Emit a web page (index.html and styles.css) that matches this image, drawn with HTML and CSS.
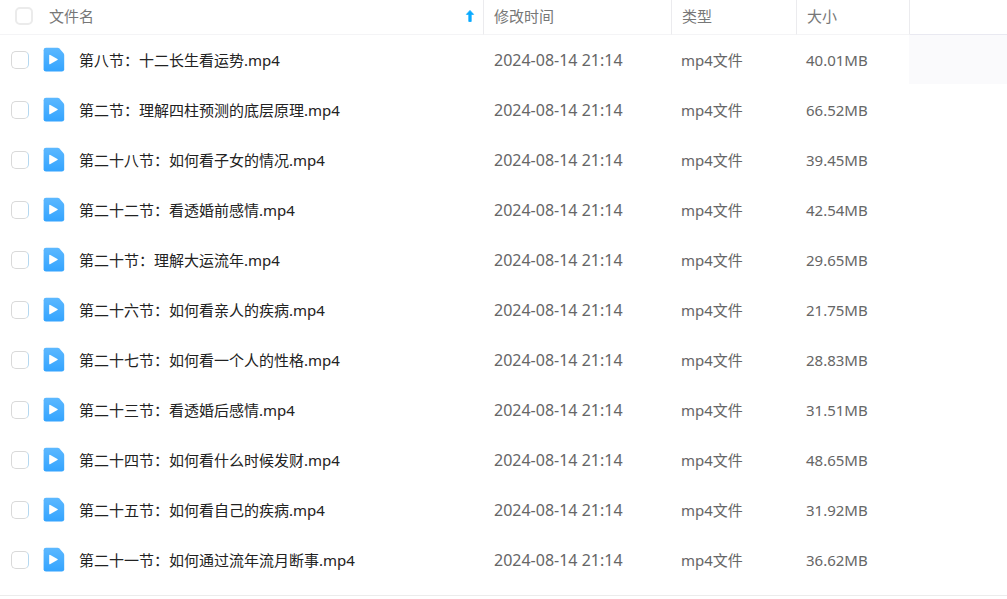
FILE: index.html
```html
<!DOCTYPE html>
<html lang="zh-CN">
<head>
    <meta charset="UTF-8">
    <meta name="viewport" content="width=device-width, initial-scale=1.0">
    <title>文件列表</title>
    <link rel="stylesheet" href="styles.css">
</head>
<body>
    <svg class="defs" aria-hidden="true">
        <defs>
            <linearGradient id="video-fill" x1="0" y1="0" x2="0" y2="1">
                <stop offset="0" stop-color="#5cb8ff"/>
                <stop offset="1" stop-color="#34a4ff"/>
            </linearGradient>
            <symbol id="icon-video" viewBox="0 0 22 26">
                <path d="M3 .8h11.600q1 0 1.800.8l4 4.400q.8.900.8 2v14.200q0 2.400-2.400 2.400H3Q.6 24.600.6 22.200V3.200Q.6.8 3 .8z" fill="url(#video-fill)"/>
                <path d="M6.200 8.600q0-1.300 1.200-.7l7 4q1 .6 0 1.200l-7 4q-1.200.6-1.200-.7z" fill="#fff"/>
            </symbol>
        </defs>
    </svg>

    <div class="file-list">
        <table class="file-table">
            <colgroup>
                <col class="col-name">
                <col class="col-time">
                <col class="col-type">
                <col class="col-size">
                <col>
            </colgroup>
            <thead>
                <tr>
                    <th scope="col">
                        <div class="head-name">
                            <input type="checkbox" class="check" id="check-all">
                            <label for="check-all">文件名</label>
                            <svg class="sort-arrow" viewBox="0 0 10 14" aria-hidden="true">
                                <path d="M5 1.400L8.600 5.400H6.200V12.500H3.800V5.400H1.400z" fill="#09aaff" stroke="#09aaff" stroke-width=".8" stroke-linejoin="round"/>
                            </svg>
                        </div>
                    </th>
                    <th scope="col">修改时间</th>
                    <th scope="col">类型</th>
                    <th scope="col">大小</th>
                    <td class="head-blank"></td>
                </tr>
            </thead>
            <tbody id="file-rows"></tbody>
        </table>
    </div>

    <script>
        const files = [
            ['第八节：十二长生看运势.mp4', '40.01MB'],
            ['第二节：理解四柱预测的底层原理.mp4', '66.52MB'],
            ['第二十八节：如何看子女的情况.mp4', '39.45MB'],
            ['第二十二节：看透婚前感情.mp4', '42.54MB'],
            ['第二十节：理解大运流年.mp4', '29.65MB'],
            ['第二十六节：如何看亲人的疾病.mp4', '21.75MB'],
            ['第二十七节：如何看一个人的性格.mp4', '28.83MB'],
            ['第二十三节：看透婚后感情.mp4', '31.51MB'],
            ['第二十四节：如何看什么时候发财.mp4', '48.65MB'],
            ['第二十五节：如何看自己的疾病.mp4', '31.92MB'],
            ['第二十一节：如何通过流年流月断事.mp4', '36.62MB']
        ];

        const fileRows = document.getElementById('file-rows');
        const checkAll = document.getElementById('check-all');

        files.forEach(([name, size], i) => {
            const row = document.createElement('tr');
            row.innerHTML = `
                <td>
                    <div class="file-name">
                        <input type="checkbox" class="check" id="file-${i}">
                        <svg class="file-icon" aria-hidden="true"><use href="#icon-video"/></svg>
                        <label for="file-${i}">${name}</label>
                    </div>
                </td>
                <td class="time">2024-08-14 21:14</td>
                <td>mp4文件</td>
                <td>${size}</td>
                <td class="blank"><div></div></td>`;
            fileRows.appendChild(row);
        });

        // Header box toggles every row
        checkAll.addEventListener('change', () => {
            fileRows.querySelectorAll('.check').forEach(box => {
                box.checked = checkAll.checked;
            });
        });
    </script>
</body>
</html>
```

FILE: styles.css
```css
body {
    margin: 0;
    background-color: #fff;
    color: #666;
    font-family: "Noto Sans", "Noto Sans CJK SC", sans-serif;
    font-size: 15px;
    line-height: 20px;
}
.defs {
    position: absolute;
    width: 0;
    height: 0;
}
.file-list {
    padding-bottom: 10px;
    border-bottom: 1px solid #ececec;
}
.file-table {
    width: 100%;
    table-layout: fixed;
    border-collapse: separate;
    border-spacing: 0;
}
.col-name {
    width: 484px;
}
.col-time {
    width: 188px;
}
.col-type {
    width: 125px;
}
.col-size {
    width: 113px;
}
.file-table th,
.file-table td {
    box-sizing: border-box;
    padding: 0 10px;
    text-align: left;
    font-weight: normal;
    white-space: nowrap;
}
.file-table thead th,
.file-table .head-blank {
    height: 35px;
    padding-bottom: 2px;
    border-bottom: 1px solid #f4f4f6;
}
.file-table thead th {
    border-right: 1px solid #ebebee;
    color: #777;
}
.file-table .head-blank {
    border-bottom-color: #e9e9f1;
}
.file-table tbody td {
    height: 50px;
    padding: 0 9px;
}
.file-table tbody .time {
    padding: 0 10px;
    font-size: 16px;
}
.head-name,
.file-name {
    display: flex;
    align-items: center;
}
.head-name {
    padding-left: 5px;
}
.head-name label {
    flex: 1;
    margin-left: 16px;
}
.check {
    appearance: none;
    flex: none;
    box-sizing: border-box;
    width: 18px;
    height: 18px;
    margin: 0;
    border: 1px solid #d9d9d9;
    border-radius: 5px;
    background-color: #fff;
    cursor: pointer;
}
.head-name .check {
    border: 2px solid #ebebeb;
}
.file-name .check {
    margin-left: 2px;
    border-right-color: #b5d8f0;
}
.check:checked {
    border-color: #09aaff;
    background-color: #09aaff;
}
.sort-arrow {
    width: 10px;
    height: 14px;
    margin-right: -2px;
}
.file-icon {
    width: 22px;
    height: 26px;
    margin: 0 14px;
}
.file-name label {
    color: #222;
    cursor: pointer;
}
.file-table tbody .blank {
    padding: 0;
    vertical-align: top;
}
.blank div {
    height: 49px;
    margin-left: -1px;
}
.file-table tbody tr:first-child .blank div {
    background-color: #fafafc;
}
@media (max-width: 768px) {
    .file-list {
        overflow-x: auto;
    }
}
```
